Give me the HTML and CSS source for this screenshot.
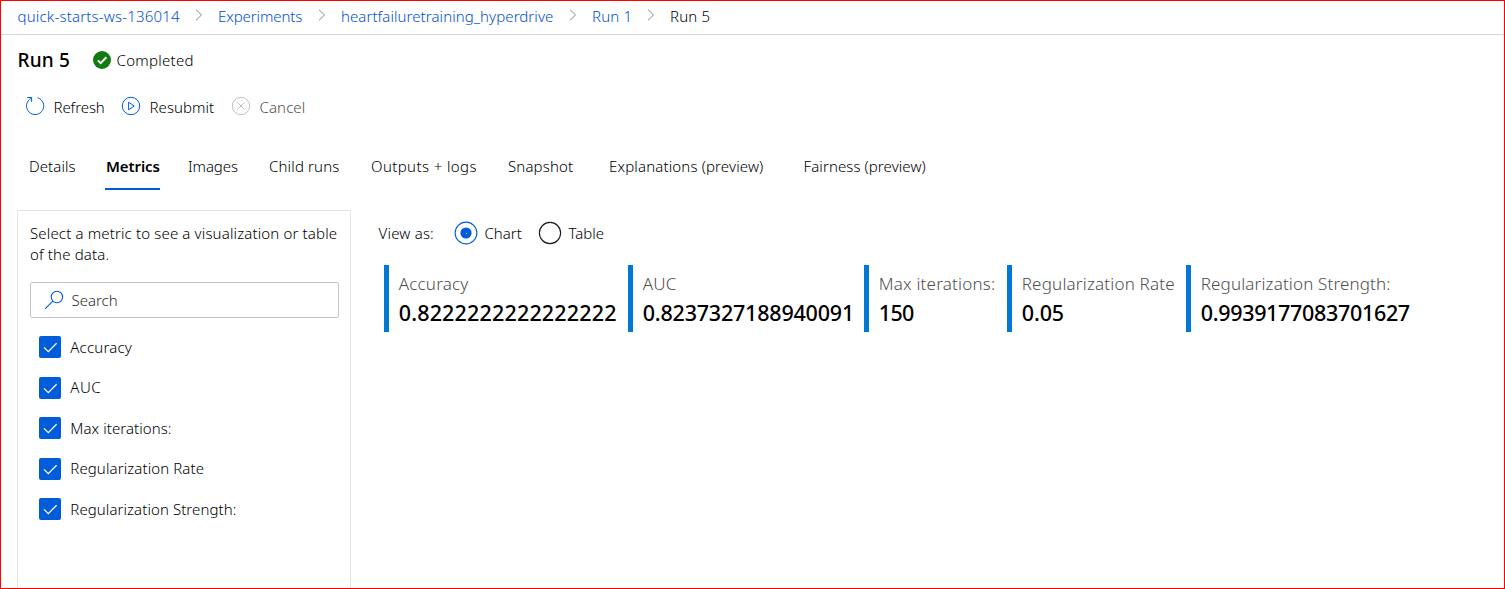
FILE: index.html
```html
<!DOCTYPE html>
<html lang="en">
<head>
<meta charset="utf-8">
<title>Run 5</title>
<link rel="stylesheet" href="styles.css">
</head>
<body>
<div class="app">
  <nav class="breadcrumb">
    <a class="crumb crumb-workspace">quick-starts-ws-136014</a>
    <svg class="chevron" viewBox="0 0 8 12"><path d="M1 .7 6.5 6 1 11.3"/></svg>
    <a class="crumb crumb-experiments">Experiments</a>
    <svg class="chevron" viewBox="0 0 8 12"><path d="M1 .7 6.5 6 1 11.3"/></svg>
    <a class="crumb crumb-experiment">heartfailuretraining_hyperdrive</a>
    <svg class="chevron" viewBox="0 0 8 12"><path d="M1 .7 6.5 6 1 11.3"/></svg>
    <a class="crumb crumb-parent">Run 1</a>
    <svg class="chevron" viewBox="0 0 8 12"><path d="M1 .7 6.5 6 1 11.3"/></svg>
    <span class="crumb crumb-current">Run 5</span>
  </nav>
  <header class="title-row">
    <h1 class="title">Run 5</h1>
    <svg class="status-icon" viewBox="0 0 18 18"><circle cx="9" cy="9" r="9"/><path d="M4.8 9.4 7.7 12.2 13.4 6.2"/></svg>
    <span class="status">Completed</span>
  </header>
  <div class="toolbar">
    <div class="command command-refresh">
      <svg class="command-icon" viewBox="0 0 20 20"><path d="M12.6 1.7A8.6 8.6 0 1 1 6 2.4M2.3 1.5H6.6V5.8"/></svg>
      <span>Refresh</span>
    </div>
    <div class="command command-resubmit">
      <svg class="command-icon" viewBox="0 0 20 20"><circle cx="10" cy="10" r="8.7"/><path d="M7.6 6.2 13.2 10 7.6 13.8Z"/></svg>
      <span>Resubmit</span>
    </div>
    <div class="command command-cancel">
      <svg class="command-icon" viewBox="0 0 20 20"><circle cx="10" cy="10" r="8.7"/><path d="M6.4 6.4 13.6 13.6M13.6 6.4 6.4 13.6"/></svg>
      <span>Cancel</span>
    </div>
  </div>
  <div class="tabs">
    <span class="tab tab-details">Details</span>
    <span class="tab tab-metrics">Metrics</span>
    <span class="tab tab-images">Images</span>
    <span class="tab tab-children">Child runs</span>
    <span class="tab tab-outputs">Outputs + logs</span>
    <span class="tab tab-snapshot">Snapshot</span>
    <span class="tab tab-explanations">Explanations (preview)</span>
    <span class="tab tab-fairness">Fairness (preview)</span>
  </div>
  <main class="content">
    <aside class="panel">
      <p class="hint">Select a metric to see a visualization or table<br>of the data.</p>
      <div class="search">
        <svg class="search-icon" viewBox="0 0 20 20"><circle cx="12.9" cy="7" r="5.7"/><path d="M8.8 11.1 1 18.8"/></svg>
        <span>Search</span>
      </div>
      <div class="options">
        <label class="option"><svg class="check" viewBox="0 0 22 22"><path d="M5 11.4 9.3 15.6 17.6 7.2"/></svg><span class="option-accuracy">Accuracy</span></label>
        <label class="option"><svg class="check" viewBox="0 0 22 22"><path d="M5 11.4 9.3 15.6 17.6 7.2"/></svg><span class="option-auc">AUC</span></label>
        <label class="option"><svg class="check" viewBox="0 0 22 22"><path d="M5 11.4 9.3 15.6 17.6 7.2"/></svg><span class="option-iterations">Max iterations:</span></label>
        <label class="option"><svg class="check" viewBox="0 0 22 22"><path d="M5 11.4 9.3 15.6 17.6 7.2"/></svg><span class="option-rate">Regularization Rate</span></label>
        <label class="option"><svg class="check" viewBox="0 0 22 22"><path d="M5 11.4 9.3 15.6 17.6 7.2"/></svg><span class="option-strength">Regularization Strength:</span></label>
      </div>
    </aside>
    <section class="results">
      <div class="view-as">
        <span class="view-label">View as:</span>
        <svg class="radio radio-on" viewBox="0 0 24 24"><circle cx="12" cy="12" r="10.9"/><circle class="radio-dot" cx="12" cy="12" r="5.6"/><circle class="radio-center" cx="12.5" cy="12.5" r=".5"/></svg>
        <span class="radio-label radio-chart">Chart</span>
        <svg class="radio" viewBox="0 0 24 24"><circle cx="12" cy="12" r="10.6"/></svg>
        <span class="radio-label radio-table">Table</span>
      </div>
      <div class="metrics">
        <div class="metric metric-accuracy"><div class="metric-name">Accuracy</div><div class="metric-value">0.8222222222222222</div></div>
        <div class="metric metric-auc"><div class="metric-name">AUC</div><div class="metric-value">0.8237327188940091</div></div>
        <div class="metric metric-iterations"><div class="metric-name">Max iterations:</div><div class="metric-value">150</div></div>
        <div class="metric metric-rate"><div class="metric-name">Regularization Rate</div><div class="metric-value">0.05</div></div>
        <div class="metric metric-strength"><div class="metric-name">Regularization Strength:</div><div class="metric-value">0.9939177083701627</div></div>
      </div>
    </section>
  </main>
</div>
</body>
</html>
```
FILE: styles.css
```css
* { box-sizing: border-box; }
body { margin: 0; }
svg { display: block; flex: none; fill: none; }
.app {
  width: 1505px;
  height: 589px;
  border: 1px solid #f00;
  background: #fff;
  color: #000;
  font: 300 15px/21px "Noto Sans", "Open Sans", sans-serif;
  white-space: nowrap;
  overflow: hidden;
  display: flex;
  flex-direction: column;
}
.breadcrumb {
  flex: none;
  height: 34px;
  padding: 0 0 3px 16.5px;
  border-bottom: 1px solid #d6d6d6;
  display: flex;
  align-items: center;
}
.crumb { color: #0050d0; letter-spacing: .15px; }
.crumb-workspace { width: 177.5px; letter-spacing: .19px; }
.crumb-experiments { width: 100px; letter-spacing: -.1px; }
.crumb-experiment { width: 228px; letter-spacing: .07px; }
.crumb-parent { width: 55px; }
.crumb-current { color: #000; }
.chevron { width: 8px; height: 12px; margin-right: 15px; position: relative; top: -1px; stroke: #8a8a8a; }
.title-row {
  flex: none;
  height: 51px;
  padding-left: 16.5px;
  display: flex;
  align-items: center;
}
.title { margin: 0; width: 75.5px; font-size: 19px; font-weight: 500; letter-spacing: .2px; }
.status { letter-spacing: .28px; }
.status-icon { width: 18px; height: 18px; margin-right: 5.5px; position: relative; top: -1px; }
.status-icon circle { fill: #107c10; }
.status-icon path { stroke: #fff; stroke-width: 2; }
.toolbar {
  flex: none;
  height: 42px;
  padding-left: 24px;
  display: flex;
  align-items: center;
}
.command { display: flex; align-items: center; gap: 8.5px; }
.command-icon { width: 20px; height: 20px; position: relative; top: -1px; stroke: #015cda; stroke-width: 1; }
.command-refresh { width: 96px; letter-spacing: -.08px; }
.command-resubmit { width: 110px; letter-spacing: .05px; }
.command-cancel { color: #504e4c; letter-spacing: .1px; }
.command-cancel .command-icon { stroke: #c3c1bf; }
.tabs {
  flex: none;
  height: 63px;
  padding: 17px 0 0 28px;
  display: flex;
  align-items: flex-start;
}
.tab { height: 45px; line-height: 42px; }
.tab-details { width: 76px; letter-spacing: .08px; }
.tab-metrics { width: 55px; margin-right: 28px; padding-left: 1px; border-bottom: 2px solid #015cda; font-weight: 600; letter-spacing: -.1px; }
.tab-images { width: 81px; letter-spacing: -.1px; }
.tab-children { width: 102px; letter-spacing: .15px; }
.tab-outputs { width: 137px; letter-spacing: .39px; }
.tab-snapshot { width: 101px; letter-spacing: .15px; }
.tab-explanations { width: 194.5px; letter-spacing: .15px; }
.tab-fairness { letter-spacing: .09px; }
.content { flex: 1; min-height: 0; display: flex; padding: 19px 0 0 16px; }
.panel {
  width: 334px;
  margin-right: 27.5px;
  padding: 12px 11px 0 12px;
  border: 1px solid #e5e5e5;
  border-bottom: 0;
}
.hint { margin: 0; letter-spacing: .15px; }
.search {
  height: 36px;
  margin-top: 17px;
  padding-left: 13px;
  border: 1px solid #c8c6c4;
  border-radius: 2px;
  color: #302e2c;
  display: flex;
  align-items: center;
  gap: 7.5px;
}
.search-icon { width: 20px; height: 20px; stroke: #015cda; stroke-width: 1.1; }
.options { margin: 18px 0 0 9px; display: grid; gap: 18.5px; }
.option { height: 22px; display: flex; align-items: center; gap: 9.3px; }
.option-accuracy { letter-spacing: .2px; }
.option-auc { letter-spacing: .5px; }
.option-iterations { letter-spacing: .07px; }
.option-rate { letter-spacing: .1px; }
.option-strength { letter-spacing: .08px; }
.check { width: 22px; height: 22px; border-radius: 2px; background: #015cda; stroke: #fff; stroke-width: 1.3; }
.results { padding-top: 11px; }
.view-as { height: 24px; display: flex; align-items: center; }
.view-label { width: 75.5px; letter-spacing: .2px; }
.radio { width: 24px; height: 24px; stroke: #1b1a19; stroke-width: 1.1; }
.radio-on { stroke: #015cda; }
.radio-dot { fill: #015cda; stroke: none; }
.radio-center { fill: #fff; stroke: none; }
.radio-label { padding-left: 6.5px; }
.radio-chart { width: 60px; }
.metrics { margin: 20px 0 0 5.5px; display: flex; }
.metric { height: 67px; border-left: 5px solid #0078d4; padding: 7px 0 0 9.7px; }
.metric-accuracy { width: 244px; }
.metric-auc { width: 236px; }
.metric-iterations { width: 143px; }
.metric-rate { width: 179px; }
.metric-name { color: #504e4c; font-size: 17px; line-height: 24px; letter-spacing: .2px; }
.metric-value { font-size: 21.5px; font-weight: 500; line-height: 34px; }
.metric-accuracy .metric-value { letter-spacing: .17px; }
.metric-auc .metric-value { letter-spacing: -.2px; }
.metric-iterations .metric-value { letter-spacing: -.6px; }
.metric-rate .metric-value { letter-spacing: -.1px; }
.metric-strength .metric-name { letter-spacing: .16px; }
.metric-strength .metric-value { letter-spacing: -.32px; }
```
